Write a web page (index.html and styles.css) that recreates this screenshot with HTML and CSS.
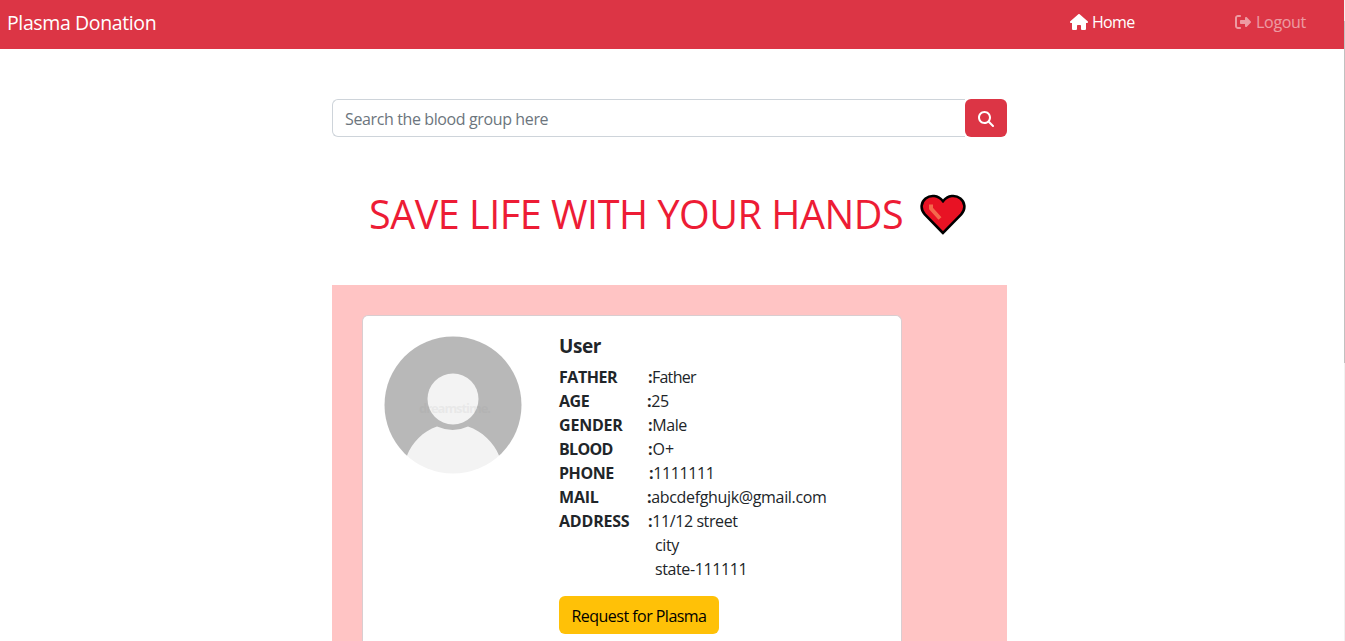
FILE: index.html
```html
<!DOCTYPE html>
<html lang="en">
<head>
<meta charset="utf-8">
<title>Plasma Donation</title>
<link rel="stylesheet" href="styles.css">
</head>
<body>
<nav class="navbar">
  <a class="brand">Plasma Donation</a>
  <div class="links">
    <a class="link home"><svg class="icon-home" viewBox="0 0 576 512"><path d="M575.8 255.5c0 18-15 32.1-32 32.1h-32l.7 160.2c0 2.7-.2 5.4-.5 8.1V472c0 22.1-17.9 40-40 40H456c-1.1 0-2.2 0-3.3-.1c-1.4 .1-2.8 .1-4.2 .1H416 392c-22.1 0-40-17.9-40-40V448 384c0-17.7-14.3-32-32-32H256c-17.7 0-32 14.3-32 32v64 24c0 22.1-17.9 40-40 40H160 128.1c-1.5 0-3-.1-4.5-.2c-1.2 .1-2.4 .2-3.6 .2H104c-22.1 0-40-17.9-40-40V360c0-.9 0-1.9 .1-2.8V287.6H32c-18 0-32-14-32-32.1c0-9 3-17 10-24L266.4 8c7-7 15-8 22-8s15 2 21 7L564.8 231.5c8 7 12 15 11 24z"/></svg><span>Home</span></a>
    <a class="link logout"><svg class="icon-logout" viewBox="0 0 512 512"><path d="M377.9 105.9L500.7 228.7c7.2 7.2 11.3 17.1 11.3 27.3s-4.1 20.1-11.3 27.3L377.9 406.1c-6.4 6.4-15 9.9-24 9.9c-18.7 0-33.9-15.2-33.9-33.9l0-62.1-128 0c-17.7 0-32-14.3-32-32l0-64c0-17.7 14.3-32 32-32l128 0 0-62.1c0-18.7 15.2-33.9 33.9-33.9c9 0 17.6 3.6 24 9.900zM160 96L96 96c-17.7 0-32 14.3-32 32l0 256c0 17.7 14.3 32 32 32l64 0c17.7 0 32 14.3 32 32s-14.3 32-32 32l-64 0c-53 0-96-43-96-96L0 128C0 75 43 32 96 32l64 0c17.7 0 32 14.3 32 32s-14.3 32-32 32z"/></svg><span>Logout</span></a>
  </div>
</nav>
<main class="content">
  <form class="search">
    <div class="search-field">Search the blood group here</div>
    <button class="search-button" type="button" aria-label="Search"><svg viewBox="0 0 512 512"><path d="M416 208c0 45.9-14.9 88.3-40 122.700L502.600 457.400c12.500 12.500 12.500 32.800 0 45.300s-32.800 12.500-45.300 0L330.700 376c-34.400 25.200-76.800 40-122.700 40C93.100 416 0 322.900 0 208S93.100 0 208 0S416 93.100 416 208zM208 352a144 144 0 1 0 0-288 144 144 0 1 0 0 288z"/></svg></button>
  </form>
  <h1 class="title"><span>SAVE LIFE WITH YOUR HANDS</span><svg class="heart" viewBox="0 0 46 42"><path d="M23 39 4.800 20.300C-.2 15 1.200 8 5.600 4.500C10.500.6 18 1 23 7.200C28 1 35.500.6 40.400 4.500C44.800 8 46.200 15 41.200 20.300Z" fill="#e81224" stroke="#000" stroke-width="2.600"/><path d="M11 10.500V14.500L20 24.500" fill="none" stroke="#f4694c" stroke-width="4" stroke-linejoin="round"/></svg></h1>
  <section class="panel">
    <article class="card">
      <svg class="avatar" viewBox="0 0 138 138">
        <defs><clipPath id="disc"><circle cx="69" cy="69" r="68.500"/></clipPath></defs>
        <g clip-path="url(#disc)">
          <path d="M0 0H138V120H0Z" fill="#b8b8b8"/>
          <path d="M23 119.500C28 107 39 95 53 90.500Q69 97.500 84 90.500C98 95 110 107 115 119.500H138V138H0V119.500Z" fill="#f3f3f3"/>
          <circle cx="69" cy="63" r="25.500" fill="#f3f3f3"/>
          <text class="watermark" x="35" y="77" textLength="72">dreamstime.</text>
        </g>
      </svg>
      <div class="details">
        <h2 class="name">User</h2>
        <dl class="facts">
          <dt>FATHER</dt><dd class="father"><b>:</b>Father</dd>
          <dt>AGE</dt><dd class="back"><b>:</b>25</dd>
          <dt class="wide">GENDER</dt><dd><b>:</b>Male</dd>
          <dt class="tight">BLOOD</dt><dd class="blood"><b>:</b>O+</dd>
          <dt>PHONE</dt><dd class="fwd"><b>:</b>1111111</dd>
          <dt class="wide">MAIL</dt><dd class="back email"><b>:</b>abcdefghujk@gmail.com</dd>
          <dt class="wide">ADDRESS</dt><dd><b>:</b>11/12 street</dd>
          <dd class="more">city</dd>
          <dd class="more">state-111111</dd>
        </dl>
        <button class="request" type="button">Request for Plasma</button>
      </div>
    </article>
  </section>
</main>
<div class="scroll-track"><div class="scroll-thumb"></div></div>
</body>
</html>
```
FILE: styles.css
```css
* { box-sizing: border-box; }
html, body { height: 100%; }
body {
  margin: 0;
  overflow: hidden;
  background: #fff;
  color: #212529;
  font: 16px/24px "Open Sans", "Noto Sans", sans-serif;
  white-space: nowrap;
}
svg { display: block; flex: none; fill: currentColor; }

.navbar {
  display: flex;
  align-items: flex-start;
  justify-content: space-between;
  width: 1344px;
  height: 49px;
  padding: 10px 38px 0 7px;
  background: #dc3545;
  color: #fff;
}
.brand { padding-top: 1px; font-size: 19.500px; letter-spacing: -.38px; }
.links { display: flex; }
.link { display: flex; align-items: center; letter-spacing: -.3px; }
.home { width: 165px; gap: 4px; letter-spacing: -.7px; }
.logout { width: 71px; gap: 5px; opacity: .5; }
.icon-home { width: 18px; height: 16px; }
.icon-logout { width: 16px; height: 16px; }

.content { width: 675px; margin: 50px 0 0 332px; }
.search { display: flex; height: 38px; }
.search-field {
  flex: 1;
  padding: 7px 12px;
  border: 1px solid #ced4da;
  border-right: 0;
  border-radius: 6px 0 0 6px;
  color: #6c757d;
  letter-spacing: -.38px;
}
.search-button {
  display: flex;
  align-items: center;
  justify-content: center;
  width: 42px;
  padding: 1px 1px 0 0;
  border: 0;
  border-radius: 6px;
  background: #dc3545;
  color: #fff;
}
.search-button svg { width: 16px; height: 16px; }

.title {
  display: flex;
  align-items: center;
  height: 48px;
  margin: 53px 0 47px;
  padding-left: 37px;
  color: #ed1c35;
  font-size: 39.500px;
  font-weight: 400;
  line-height: 48px;
  letter-spacing: -.46px;
}
.title span { width: 551px; }
.heart { width: 46px; height: 42px; margin-top: 1px; }

.panel { height: 356px; padding: 30px 30px 0; background: #ffc4c4; }
.card {
  display: flex;
  width: 540px;
  height: 326px;
  padding: 18px 20px 0;
  border: 1px solid #d9cdd0;
  border-bottom: 0;
  border-radius: 6px 6px 0 0;
  background: #fff;
}
.avatar { width: 138px; height: 138px; margin: 2px 0 0 1px; }
.watermark { font: bold 13px "Open Sans", sans-serif; fill: #888; opacity: .1; }
.details { margin-left: 37px; }
.name { margin: 0 0 7px; font-size: 19px; font-weight: 700; line-height: 24px; letter-spacing: -.4px; }
.facts { display: grid; grid-template-columns: 89px auto; grid-auto-rows: 24px; margin: 0 0 15px; }
dt { font-weight: 700; letter-spacing: -.45px; }
dt.wide { letter-spacing: -.2px; }
dt.tight { letter-spacing: -.7px; }
dd { margin: 0; letter-spacing: -.4px; }
dd.father { letter-spacing: -.7px; }
dd.blood { letter-spacing: 0; }
dd.email { letter-spacing: -.34px; }
.back { margin-left: -1px; }
.fwd { margin-left: 1px; }
.more { grid-column: 2; padding-left: 7px; }
.request {
  display: block;
  width: 160px;
  height: 38px;
  padding: 2px 0 0;
  border: 0;
  border-radius: 6px;
  background: #ffc107;
  color: #000;
  font: inherit;
  letter-spacing: -.53px;
}

.scroll-track { position: absolute; top: 0; right: 0; width: 1px; height: 641px; padding-top: 21px; background: #f1f1f1; }
.scroll-thumb { height: 342px; background: #c1c1c1; }
```
